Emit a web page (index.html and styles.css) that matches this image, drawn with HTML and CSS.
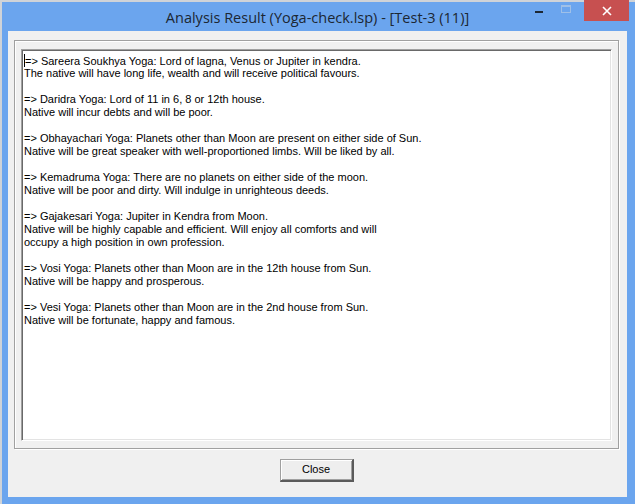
FILE: index.html
```html
<!DOCTYPE html>
<html lang="en">
<head>
    <meta charset="UTF-8">
    <title>Analysis Result (Yoga-check.lsp) - [Test-3 (11)]</title>
    <link rel="stylesheet" href="styles.css">
</head>
<body>
    <div class="window">
        <div class="titlebar">
            <div class="title">Analysis Result (Yoga-check.lsp) - [Test-3 (11)]</div>
            <div class="controls">
                <div class="ctl min"><span></span></div>
                <div class="ctl max"><span></span></div>
                <div class="ctl close">
                    <svg width="10" height="10" viewBox="0 0 10 10">
                        <path d="M1 1 L9 9 M9 1 L1 9" stroke="#fff" stroke-width="1.6"/>
                    </svg>
                </div>
            </div>
        </div>
        <div class="client">
            <div class="panel">
                <div class="textbox">
                    <div class="line"><span class="caret"></span>=&gt; Sareera Soukhya Yoga: Lord of lagna, Venus or Jupiter in kendra.</div>
                    <div class="line">The native will have long life, wealth and will receive political favours.</div>
                    <div class="line"></div>
                    <div class="line">=&gt; Daridra Yoga: Lord of 11 in 6, 8 or 12th house.</div>
                    <div class="line">Native will incur debts and will be poor.</div>
                    <div class="line"></div>
                    <div class="line">=&gt; Obhayachari Yoga: Planets other than Moon are present on either side of Sun.</div>
                    <div class="line">Native will be great speaker with well-proportioned limbs. Will be liked by all.</div>
                    <div class="line"></div>
                    <div class="line">=&gt; Kemadruma Yoga: There are no planets on either side of the moon.</div>
                    <div class="line">Native will be poor and dirty. Will indulge in unrighteous deeds.</div>
                    <div class="line"></div>
                    <div class="line">=&gt; Gajakesari Yoga: Jupiter in Kendra from Moon.</div>
                    <div class="line">Native will be highly capable and efficient. Will enjoy all comforts and will</div>
                    <div class="line">occupy a high position in own profession.</div>
                    <div class="line"></div>
                    <div class="line">=&gt; Vosi Yoga: Planets other than Moon are in the 12th house from Sun.</div>
                    <div class="line">Native will be happy and prosperous.</div>
                    <div class="line"></div>
                    <div class="line">=&gt; Vesi Yoga: Planets other than Moon are in the 2nd house from Sun.</div>
                    <div class="line">Native will be fortunate, happy and famous.</div>
                </div>
            </div>
            <div class="buttons">
                <div class="button">Close</div>
            </div>
        </div>
    </div>
</body>
</html>
```

FILE: styles.css
```css
html, body {
    margin: 0;
    padding: 0;
}
body {
    width: 635px;
    height: 504px;
    overflow: hidden;
    background-color: #cfd3d8;
}
.window {
    box-sizing: border-box;
    width: 633px;
    height: 502px;
    margin: 2px 0 0 2px;
    padding: 0 8px 7px 6px;
    background-color: #6ba5ee;
    display: flex;
    flex-direction: column;
}
.titlebar {
    height: 29px;
    flex: none;
    display: flex;
    align-items: center;
    justify-content: center;
    position: relative;
}
.title {
    font-family: "Open Sans", "Noto Sans", sans-serif;
    font-size: 14.5px;
    color: #1c2733;
    margin-top: 1px;
}
.controls {
    position: absolute;
    top: -2px;
    right: -2px;
    display: flex;
}
.ctl {
    height: 21px;
    display: flex;
    align-items: center;
    justify-content: center;
}
.min {
    width: 27px;
}
.min span {
    width: 8px;
    height: 2px;
    margin-top: 3px;
    background-color: #1c2733;
}
.max {
    width: 27px;
}
.max span {
    box-sizing: border-box;
    width: 10px;
    height: 8px;
    border: 1px solid #9fc0e8;
    border-top-width: 2px;
    margin-top: -3px;
}
.close {
    width: 45px;
    background-color: #c75050;
    margin-left: 5px;
}
.client {
    flex: 1;
    background-color: #f0f0f0;
    padding: 9px 8px 0 6px;
    display: flex;
    flex-direction: column;
}
.panel {
    height: 409px;
    border: 1px solid #a0a0a0;
    box-shadow: inset 1px 1px 0 #fff, 1px 1px 0 #fff;
    padding: 8px 6px 7px 6px;
    box-sizing: border-box;
    display: flex;
}
.textbox {
    flex: 1;
    background-color: #fff;
    border-top: 1px solid #a0a0a0;
    border-left: 1px solid #a0a0a0;
    border-right: 1px solid #fff;
    border-bottom: 1px solid #fff;
    box-shadow: inset 1px 1px 0 #696969, inset -1px -1px 0 #e3e3e3;
    padding: 4px 2px 0 2px;
    font-family: "Liberation Sans", Arial, sans-serif;
    font-size: 11px;
    color: #000;
}
.line {
    height: 13px;
    line-height: 13px;
    white-space: pre;
}
.caret {
    display: inline-block;
    width: 1px;
    height: 13px;
    background-color: #000;
    vertical-align: -2px;
}
.buttons {
    flex: 1;
    display: flex;
    justify-content: center;
    align-items: flex-start;
    padding-top: 10px;
}
.button {
    box-sizing: border-box;
    width: 74px;
    height: 23px;
    border-top: 1px solid #a0a0a0;
    border-left: 1px solid #a0a0a0;
    border-right: 2px solid #5a5a5a;
    border-bottom: 2px solid #5a5a5a;
    box-shadow: inset 1px 1px 0 #fff, inset -1px -1px 0 #a0a0a0;
    background-color: #eeeeee;
    font-family: "Liberation Sans", Arial, sans-serif;
    font-size: 11px;
    line-height: 19px;
    text-align: center;
    color: #000;
}
```
